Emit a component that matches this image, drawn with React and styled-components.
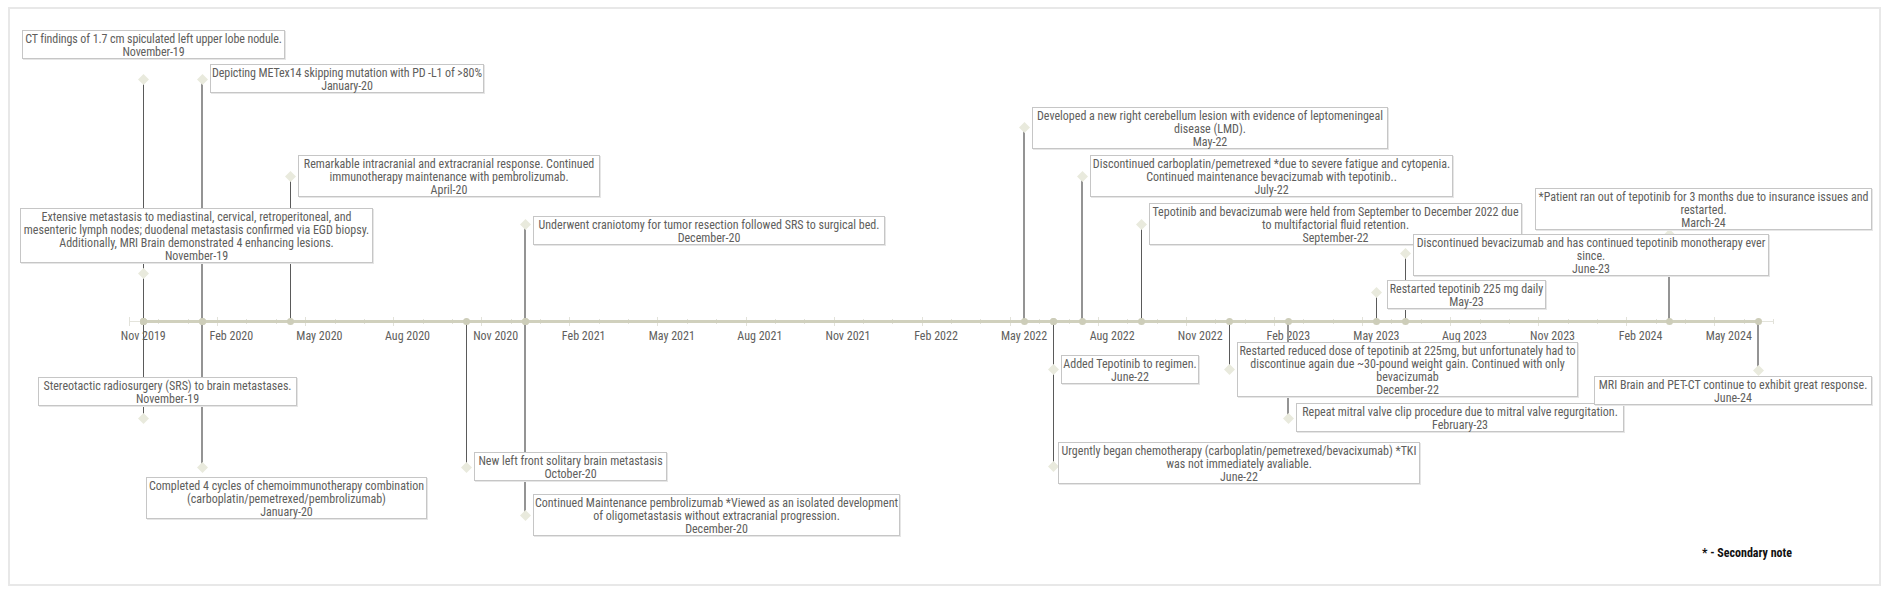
import React from 'react';
import styled, { createGlobalStyle } from 'styled-components';

const FRAME_LEFT = 10;
const FRAME_TOP = 9;
const AXIS_Y = 321;
const MONTH = 29.36;
const FIRST_TICK = 129;

const axisLabels = [
    'Nov 2019', 'Feb 2020', 'May 2020', 'Aug 2020', 'Nov 2020', 'Feb 2021', 'May 2021', 'Aug 2021', 'Nov 2021',
    'Feb 2022', 'May 2022', 'Aug 2022', 'Nov 2022', 'Feb 2023', 'May 2023', 'Aug 2023', 'Nov 2023', 'Feb 2024', 'May 2024',
];

const events = [
    { x: 143, dy: 79, narrow: true, l: 22, t: 30, w: 263, lines: ['CT findings of 1.7 cm spiculated left upper lobe nodule.', 'November-19'] },
    { x: 202, dy: 79, soft: true, narrow: true, l: 210, t: 64, w: 274, lines: ['Depicting METex14 skipping mutation with PD -L1 of >80%', 'January-20'] },
    { x: 290, dy: 176, l: 298, t: 155, w: 302, lines: ['Remarkable intracranial and extracranial response. Continued', 'immunotherapy maintenance with pembrolizumab.', 'April-20'] },
    { x: 143, dy: 273, l: 20, t: 208, w: 353, lines: ['Extensive metastasis to mediastinal, cervical, retroperitoneal, and', 'mesenteric lymph nodes; duodenal metastasis confirmed via EGD biopsy.', 'Additionally, MRI Brain demonstrated 4 enhancing lesions.', 'November-19'] },
    { x: 525, dy: 224, soft: true, l: 533, t: 216, w: 352, lines: ['Underwent craniotomy for tumor resection followed SRS to surgical bed.', 'December-20'] },
    { x: 1024, dy: 127, soft: true, l: 1032, t: 107, w: 356, lines: ['Developed a new right cerebellum lesion with evidence of leptomeningeal', 'disease (LMD).', 'May-22'] },
    { x: 1082, dy: 176, soft: true, l: 1090, t: 155, w: 363, lines: ['Discontinued carboplatin/pemetrexed *due to severe fatigue and cytopenia.', 'Continued maintenance bevacizumab with tepotinib..', 'July-22'] },
    { x: 1141, dy: 224, l: 1149, t: 203, w: 373, lines: ['Tepotinib and bevacizumab were held from September to December 2022 due', 'to multifactorial fluid retention.', 'September-22'] },
    { x: 1669, dy: 234, soft: true, l: 1535, t: 188, w: 337, lines: ['*Patient ran out of tepotinib for 3 months due to insurance issues and', 'restarted.', 'March-24'] },
    { x: 1405, dy: 253, l: 1413, t: 234, w: 356, lines: ['Discontinued bevacizumab and has continued tepotinib monotherapy ever', 'since.', 'June-23'] },
    { x: 1376, dy: 292, l: 1387, t: 280, w: 159, lines: ['Restarted tepotinib 225 mg daily', 'May-23'] },
    { x: 143, dy: 418, l: 38, t: 377, w: 259, lines: ['Stereotactic radiosurgery (SRS) to brain metastases.', 'November-19'] },
    { x: 202, dy: 467, soft: true, l: 146, t: 477, w: 281, lines: ['Completed 4 cycles of chemoimmunotherapy combination', '(carboplatin/pemetrexed/pembrolizumab)', 'January-20'] },
    { x: 466, dy: 467, l: 474, t: 452, w: 193, lines: ['New left front solitary brain metastasis', 'October-20'] },
    { x: 525, dy: 515, soft: true, l: 533, t: 494, w: 367, lines: ['Continued Maintenance pembrolizumab *Viewed as an isolated development', 'of oligometastasis without extracranial progression.', 'December-20'] },
    { x: 1053, dy: 369, l: 1061, t: 355, w: 138, lines: ['Added Tepotinib to regimen.', 'June-22'] },
    { x: 1053, dy: 466, l: 1058, t: 442, w: 362, lines: ['Urgently began chemotherapy (carboplatin/pemetrexed/bevacixumab) *TKI', 'was not immediately avaliable.', 'June-22'] },
    { x: 1229, dy: 369, l: 1237, t: 342, w: 341, lines: ['Restarted reduced dose of tepotinib at 225mg, but unfortunately had to', 'discontinue again due ~30-pound weight gain. Continued with only', 'bevacizumab', 'December-22'] },
    { x: 1288, dy: 418, soft: true, l: 1296, t: 403, w: 328, lines: ['Repeat mitral valve clip procedure due to mitral valve regurgitation.', 'February-23'] },
    { x: 1758, dy: 370, soft: true, l: 1594, t: 376, w: 278, lines: ['MRI Brain and PET-CT continue to exhibit great response.', 'June-24'] },
];

const GlobalStyle = createGlobalStyle`
    html, body {
        margin: 0;
        background: #ffffff;
    }
    body {
        font-family: Roboto, "Liberation Sans", sans-serif;
    }
`;

const Page = styled.div`
    width: 1891px;
    height: 597px;
    box-sizing: border-box;
    padding: 7px 10px 11px 8px;
    overflow: hidden;
`;

const Frame = styled.div`
    position: relative;
    height: 100%;
    box-sizing: border-box;
    border: 2px solid #e8e8e8;
    background: #ffffff;
`;

const ThinAxis = styled.div`
    position: absolute;
    left: ${FIRST_TICK - FRAME_LEFT}px;
    width: ${56 * MONTH}px;
    top: ${AXIS_Y - FRAME_TOP}px;
    height: 1px;
    background: #e4e4dc;
`;

const ThickAxis = styled.div`
    position: absolute;
    left: ${143 - FRAME_LEFT}px;
    width: ${1758 - 143}px;
    top: ${AXIS_Y - 1 - FRAME_TOP}px;
    height: 3px;
    background: #d0d0bd;
`;

const Tick = styled.div`
    position: absolute;
    left: ${p => p.$x - FRAME_LEFT}px;
    top: ${p => AXIS_Y - (p.$major ? 4 : 2) - FRAME_TOP}px;
    width: 1px;
    height: ${p => (p.$major ? 9 : 5)}px;
    background: #e2e2da;
`;

// the reference uses a narrow DIN-like face, so Roboto is squeezed to its width
const AxisLabel = styled.div`
    position: absolute;
    left: ${p => p.$x - 40 - FRAME_LEFT}px;
    top: ${329 - FRAME_TOP}px;
    width: 80px;
    text-align: center;
    font-size: 12px;
    font-stretch: 84%;
    font-weight: 450;
    line-height: 14px;
    color: #605e5c;
`;

const Dot = styled.div`
    position: absolute;
    left: ${p => p.$x - 3.5 - FRAME_LEFT}px;
    top: ${AXIS_Y - 3 - FRAME_TOP}px;
    width: 7px;
    height: 7px;
    border-radius: 50%;
    background: #cdcdb9;
`;

const Stem = styled.div`
    position: absolute;
    left: ${p => p.$x - (p.$soft ? 1 : 0) - FRAME_LEFT}px;
    top: ${p => p.$top - FRAME_TOP}px;
    width: ${p => (p.$soft ? 2 : 1)}px;
    height: ${p => p.$height}px;
    background: ${p => (p.$soft ? '#949494' : '#5a5a5a')};
`;

const Diamond = styled.div`
    position: absolute;
    left: ${p => p.$x - 5 - FRAME_LEFT}px;
    top: ${p => p.$y - 5 - FRAME_TOP}px;
    width: 11px;
    height: 11px;
    background: #e9eadd;
    clip-path: polygon(50% 0, 100% 50%, 50% 100%, 0 50%);
`;

const Note = styled.div`
    position: absolute;
    left: ${p => p.$left - FRAME_LEFT}px;
    top: ${p => p.$top - FRAME_TOP}px;
    width: ${p => p.$width}px;
    box-sizing: border-box;
    padding-top: 1px;
    border: 1px solid #c6c6c6;
    box-shadow: 1px 1px 0 #e6e6e6;
    background: #ffffff;
    font-size: 12px;
    font-stretch: 84%;
    font-weight: 450;
    letter-spacing: ${p => (p.$narrow ? '-0.1px' : '0')};
    line-height: 13px;
    color: #605e5c;
`;

const NoteLine = styled.div`
    position: relative;
    top: 1px;
    display: flex;
    justify-content: center;
    white-space: nowrap;
`;

const Footnote = styled.div`
    position: absolute;
    left: ${1702 - FRAME_LEFT}px;
    top: ${546 - FRAME_TOP}px;
    font-size: 12px;
    font-stretch: 85%;
    font-weight: 700;
    line-height: 14px;
    color: #111111;
`;

export default function App() {
    const ticks = Array.from({ length: 57 }, (_, i) => i);

    return (
        <Page>
            <GlobalStyle />
            <Frame>
                <ThinAxis />
                {ticks.map(i => (
                    <Tick key={i} $x={Math.round(FIRST_TICK + i * MONTH)} $major={i % 3 === 0} />
                ))}
                <ThickAxis />
                {axisLabels.map((label, i) => (
                    <AxisLabel key={label} $x={143.3 + i * 3 * MONTH}>{label}</AxisLabel>
                ))}
                {events.map((e, i) => (
                    <Stem
                        key={i}
                        $x={e.x}
                        $soft={e.soft}
                        $top={Math.min(e.dy, AXIS_Y)}
                        $height={Math.abs(e.dy - AXIS_Y)}
                    />
                ))}
                {events.map((e, i) => <Dot key={i} $x={e.x} />)}
                {events.map((e, i) => <Diamond key={i} $x={e.x} $y={e.dy} />)}
                {events.map((e, i) => (
                    <Note key={i} $left={e.l} $top={e.t} $width={e.w} $narrow={e.narrow}>
                        {e.lines.map((line, n) => <NoteLine key={n}>{line}</NoteLine>)}
                    </Note>
                ))}
                <Footnote>* - Secondary note</Footnote>
            </Frame>
        </Page>
    );
}
